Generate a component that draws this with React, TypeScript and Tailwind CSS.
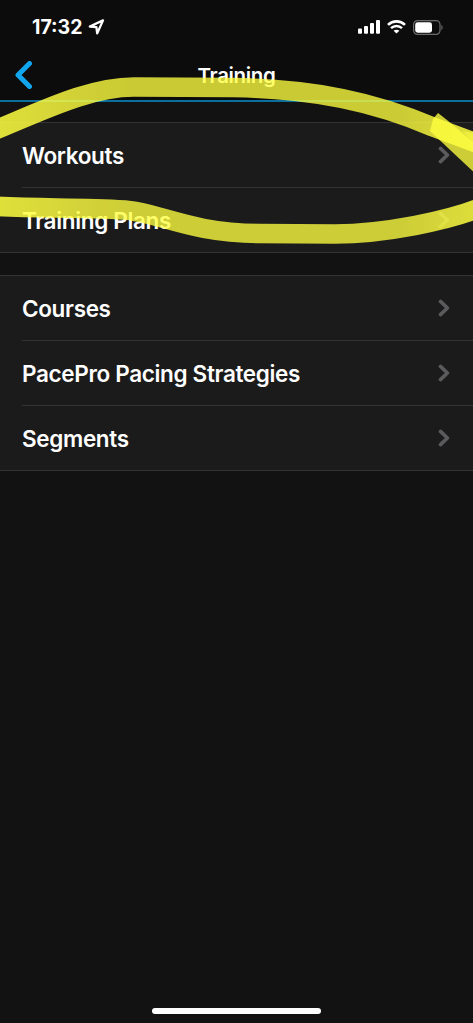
import clsx from "clsx";

interface MenuSection {
  id: string;
  items: string[];
}

const sections: MenuSection[] = [
  { id: "plans", items: ["Workouts", "Training Plans"] },
  { id: "routes", items: ["Courses", "PacePro Pacing Strategies", "Segments"] },
];

function StatusBar() {
  return (
    <div className="flex h-[54px] items-center justify-between pl-8 pr-[30px] text-white">
      <div className="flex items-center gap-[6px]">
        <span className="pt-0.5 text-[19.5px] font-bold leading-none">17:32</span>
        <svg className="h-4 w-[17px]" viewBox="0 0 17 16" fill="none">
          <path
            d="M1.8 7.5L15 1.4L9.2 14.4L8.4 8.2Z"
            stroke="currentColor"
            strokeWidth={2.3}
            strokeLinejoin="round"
          />
        </svg>
      </div>
      <div className="flex items-center gap-[7px]">
        <svg className="h-[14px] w-[22px]" viewBox="0 0 22 14" fill="currentColor">
          <rect x="0" y="8.5" width="4" height="5.3" rx="1" />
          <rect x="6" y="6" width="4" height="7.8" rx="1" />
          <rect x="12" y="3" width="4" height="10.8" rx="1" />
          <rect x="18" y="0" width="4" height="13.8" rx="1" />
        </svg>
        <svg className="h-[14px] w-[19px]" viewBox="0 0 19 14" fill="none" stroke="currentColor">
          <path d="M1 4.9C5.8 0.2 13.2 0.2 18 4.9" strokeWidth={2.7} />
          <path d="M4 8.2C7.2 5.2 11.8 5.2 15 8.2" strokeWidth={2.5} />
          <path d="M9.5 13.6L6.6 10.7C8.2 9.3 10.8 9.3 12.4 10.7Z" fill="currentColor" stroke="none" />
        </svg>
        <svg className="h-[15px] w-[30px]" viewBox="0 0 30 15" fill="none">
          <rect x="0.6" y="0.6" width="26.4" height="13.8" rx="4" stroke="#6b6b6b" strokeWidth={1.2} />
          <rect x="2.2" y="2.3" width="16.8" height="10.4" rx="2.4" fill="#ffffff" />
          <path d="M28.4 5V10C30 9.4 30 5.6 28.4 5Z" fill="#6b6b6b" />
        </svg>
      </div>
    </div>
  );
}

function Chevron() {
  return (
    <svg className="h-[18px] w-3" viewBox="0 0 12 18" fill="none">
      <path
        d="M2.5 2.4L9.4 9L2.5 15.6"
        stroke="#5b5b5e"
        strokeWidth={3.6}
        strokeLinecap="round"
        strokeLinejoin="round"
      />
    </svg>
  );
}

function Section({ items }: { items: string[] }) {
  return (
    <ul className="border-y border-[#333333] bg-[#1b1b1b] pl-[22px]">
      {items.map((item, i) => (
        <li
          key={item}
          className={clsx(
            "flex items-center justify-between pr-[23px]",
            i > 0 ? "h-[65px] border-t border-[#333333]" : "h-16"
          )}
        >
          <span className="pt-0.5 text-[22.5px] font-semibold leading-none tracking-[-0.34px] text-white">
            {item}
          </span>
          <Chevron />
        </li>
      ))}
    </ul>
  );
}

/* Translucent highlighter strokes drawn over the list */
function Highlighter() {
  const upper = "M-12 133C40 112 88 87 134 87L233 87.5C315 89 375 102 433 127L490 148";
  const lower = "M-10 206C40 209 75 207 125 210C160 213 190 233 258 233.5L335 234C380 234 450 222 492 203";

  return (
    <svg
      className="pointer-events-none absolute left-0 top-0 h-[270px] w-[473px]"
      viewBox="0 0 473 270"
      fill="none"
    >
      <defs>
        <linearGradient id="ink" gradientUnits="userSpaceOnUse" x1="0" y1="0" x2="473" y2="0">
          <stop offset="0" stopColor="#ffff40" stopOpacity="0.86" />
          <stop offset="0.28" stopColor="#ffff40" stopOpacity="0.78" />
          <stop offset="0.85" stopColor="#ffff40" stopOpacity="0.78" />
          <stop offset="1" stopColor="#ffff40" stopOpacity="0.85" />
        </linearGradient>
        <filter id="soften" filterUnits="userSpaceOnUse" x="-20" y="60" width="520" height="210">
          <feGaussianBlur stdDeviation="0.7" />
        </filter>
      </defs>
      <g filter="url(#soften)">
        <path d={upper} stroke="url(#ink)" strokeWidth={19.5} />
        <path d={lower} stroke="url(#ink)" strokeWidth={19.5} />
        <path d="M438 113L447 120L480 148V178L430 131L433 119Z" fill="#ffff40" fillOpacity={0.78} />
        <path d="M462 131L480 134V150Z" fill="#ffff40" fillOpacity={0.5} />
      </g>
    </svg>
  );
}

export default function App() {
  return (
    <div className="relative flex h-[1023px] w-[473px] flex-col overflow-hidden bg-[#121212] font-['Inter',sans-serif]">
      <header className="h-[102px] border-b-2 border-[#0b6f9b] bg-[#0c0c0c]">
        <StatusBar />
        <div className="grid h-[42px] grid-cols-[48px_1fr_48px] items-center">
          <button aria-label="Back" className="pl-[15px]">
            <svg className="h-7 w-[18px]" viewBox="0 0 18 28" fill="none">
              <path
                d="M14.5 2.5L3 14L14.5 25.5"
                stroke="#11a5ee"
                strokeWidth={5}
                strokeLinecap="round"
                strokeLinejoin="round"
              />
            </svg>
          </button>
          <h1 className="pt-0.5 text-center text-[20.5px] font-semibold leading-none tracking-[-0.35px] text-white">
            Training
          </h1>
        </div>
      </header>

      <main className="flex flex-1 flex-col gap-[22px] pt-5">
        {sections.map((section) => (
          <Section key={section.id} items={section.items} />
        ))}
      </main>

      <div className="mx-auto mb-[9px] h-[6px] w-[169px] rounded-full bg-white" />
      <Highlighter />
    </div>
  );
}
